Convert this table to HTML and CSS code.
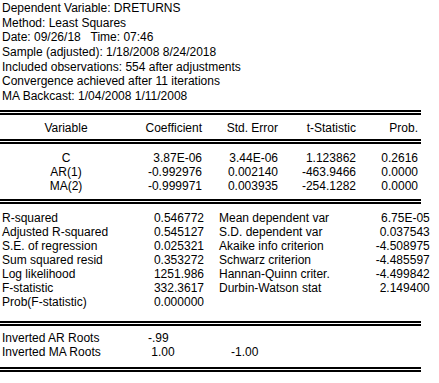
FILE: index.html
```html
<!DOCTYPE html>
<html>
<head>
<meta charset="utf-8">
<link rel="stylesheet" href="styles.css">
</head>
<body>
<div class="output">
  <div class="info">
    <div>Dependent Variable: DRETURNS</div>
    <div>Method: Least Squares</div>
    <div>Date: 09/26/18&nbsp;&nbsp; Time: 07:46</div>
    <div>Sample (adjusted): 1/18/2008 8/24/2018</div>
    <div>Included observations: 554 after adjustments</div>
    <div>Convergence achieved after 11 iterations</div>
    <div>MA Backcast: 1/04/2008 1/11/2008</div>
  </div>
  <div class="dbl first"></div>
  <div class="coef head">
    <div class="var">Variable</div>
    <div class="num">Coefficient</div>
    <div class="num">Std. Error</div>
    <div class="num">t-Statistic</div>
    <div class="num">Prob.</div>
  </div>
  <div class="dbl"></div>
  <div class="coef body">
    <div class="var">C</div>
    <div class="num">3.87E-06</div>
    <div class="num">3.44E-06</div>
    <div class="num">1.123862</div>
    <div class="num">0.2616</div>
    <div class="var">AR(1)</div>
    <div class="num">-0.992976</div>
    <div class="num">0.002140</div>
    <div class="num">-463.9466</div>
    <div class="num">0.0000</div>
    <div class="var">MA(2)</div>
    <div class="num">-0.999971</div>
    <div class="num">0.003935</div>
    <div class="num">-254.1282</div>
    <div class="num">0.0000</div>
  </div>
  <div class="dbl"></div>
  <div class="stats">
    <div>R-squared</div><div class="num">0.546772</div><div class="lab2">Mean dependent var</div><div class="num">6.75E-05</div>
    <div>Adjusted R-squared</div><div class="num">0.545127</div><div class="lab2">S.D. dependent var</div><div class="num">0.037543</div>
    <div>S.E. of regression</div><div class="num">0.025321</div><div class="lab2">Akaike info criterion</div><div class="num">-4.508975</div>
    <div>Sum squared resid</div><div class="num">0.353272</div><div class="lab2">Schwarz criterion</div><div class="num">-4.485597</div>
    <div>Log likelihood</div><div class="num">1251.986</div><div class="lab2">Hannan-Quinn criter.</div><div class="num">-4.499842</div>
    <div>F-statistic</div><div class="num">332.3617</div><div class="lab2">Durbin-Watson stat</div><div class="num">2.149400</div>
    <div>Prob(F-statistic)</div><div class="num">0.000000</div><div class="lab2"></div><div class="num"></div>
  </div>
  <div class="dbl"></div>
  <div class="roots">
    <div>Inverted AR Roots</div><div class="root">-.99</div><div class="root"></div>
    <div>Inverted MA Roots</div><div class="root">&nbsp;1.00</div><div class="root">-1.00</div>
  </div>
  <div class="dbl"></div>
</div>
</body>
</html>
```

FILE: styles.css
```css
html, body {
  margin: 0;
  padding: 0;
  background: #fff;
}
body {
  font-family: "Liberation Sans", Arial, sans-serif;
  font-size: 12px;
  color: #000;
}
.output {
  width: 421px;
}
.info {
  padding: 1px 0 0 2px;
  line-height: 14.67px;
  white-space: nowrap;
}
.dbl {
  height: 1px;
  border-top: 2px solid #000;
  border-bottom: 2px solid #000;
}
.dbl.first {
  margin-top: 6px;
}
.coef {
  display: grid;
  grid-template-columns: 132px 70px 76px 78px 62px;
  line-height: 14px;
}
.coef .var {
  text-align: center;
}
.num {
  text-align: right;
  white-space: nowrap;
}
.coef.head {
  padding: 6px 0 4px;
}
.coef.body {
  padding: 7px 0 6px;
}
.stats {
  display: grid;
  grid-template-columns: 142px 60px 15px 127px 75px;
  grid-template-columns: 140px 62px 1fr 100px;
  line-height: 14px;
  padding: 7px 0 12px 2px;
  white-space: nowrap;
}
.stats .lab2 {
  padding-left: 15px;
}
.roots {
  display: grid;
  grid-template-columns: 146px 83px 1fr;
  line-height: 14px;
  padding: 5px 0 8px 2px;
  white-space: pre;
}
```
